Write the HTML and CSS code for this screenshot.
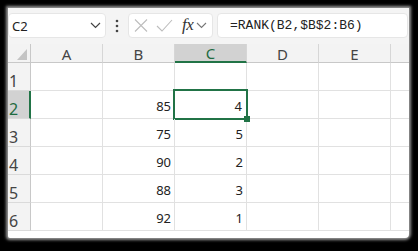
FILE: index.html
```html
<!DOCTYPE html>
<html>
<head>
    <meta charset="utf-8">
    <link rel="stylesheet" href="styles.css">
</head>
<body>
    <div class="paper">
        <div class="toolbar">
            <div class="namebox">
                <span>C2</span>
                <svg class="chev" width="11" height="7" viewBox="0 0 11 7"><path d="M1 1l4.5 4.5L10 1" fill="none" stroke="#444" stroke-width="1.2"/></svg>
            </div>
            <div class="dots">
                <svg width="4" height="14" viewBox="0 0 4 14"><circle cx="2" cy="2" r="1.3" fill="#444"/><circle cx="2" cy="7" r="1.3" fill="#444"/><circle cx="2" cy="12" r="1.3" fill="#444"/></svg>
            </div>
            <div class="fxbox">
                <svg width="14" height="13" viewBox="0 0 14 13"><path d="M1 0.5l12 12M13 0.5l-12 12" fill="none" stroke="#bdbdbd" stroke-width="1.1"/></svg>
                <svg width="17" height="13" viewBox="0 0 17 13"><path d="M1 7l5 5L16 1" fill="none" stroke="#bdbdbd" stroke-width="1.1"/></svg>
                <span class="fx">fx</span>
                <svg width="11" height="7" viewBox="0 0 11 7"><path d="M1 1l4.5 4.5L10 1" fill="none" stroke="#777" stroke-width="1.1"/></svg>
            </div>
            <div class="formula">=RANK(B2,$B$2:B6)</div>
        </div>

        <div class="grid">
            <div class="corner"><span class="tri"></span></div>
            <div class="colhead">A</div>
            <div class="colhead">B</div>
            <div class="colhead active">C</div>
            <div class="colhead">D</div>
            <div class="colhead">E</div>
            <div class="colhead last"></div>

            <div class="rowhead">1</div>
            <div class="cell"></div><div class="cell"></div><div class="cell"></div><div class="cell"></div><div class="cell"></div><div class="cell last"></div>

            <div class="rowhead active">2</div>
            <div class="cell"></div><div class="cell">85</div><div class="cell selected">4<span class="handle"></span></div><div class="cell"></div><div class="cell"></div><div class="cell last"></div>

            <div class="rowhead">3</div>
            <div class="cell"></div><div class="cell">75</div><div class="cell">5</div><div class="cell"></div><div class="cell"></div><div class="cell last"></div>

            <div class="rowhead">4</div>
            <div class="cell"></div><div class="cell">90</div><div class="cell">2</div><div class="cell"></div><div class="cell"></div><div class="cell last"></div>

            <div class="rowhead">5</div>
            <div class="cell"></div><div class="cell">88</div><div class="cell">3</div><div class="cell"></div><div class="cell"></div><div class="cell last"></div>

            <div class="rowhead">6</div>
            <div class="cell"></div><div class="cell">92</div><div class="cell">1</div><div class="cell"></div><div class="cell"></div><div class="cell last"></div>
        </div>
    </div>
</body>
</html>
```

FILE: styles.css
```css
body {
    margin: 0;
    background: #000;
    font-family: "Noto Sans", "Open Sans", sans-serif;
    color: #222;
    width: 418px;
    height: 251px;
    overflow: hidden;
}

.paper {
    margin: 8px 0 0 8px;
    width: 401px;
    height: 230px;
    background: #fff;
    overflow: hidden;
    box-shadow: 0 0 3px 2px rgba(190, 190, 190, 0.8);
    border-radius: 0 0 4px 2px;
}

/* formula bar */

.toolbar {
    height: 36px;
    box-sizing: border-box;
    padding: 5px 0 0 0;
    background: #f4f4f4;
    display: flex;
    align-items: flex-start;
}

.namebox {
    width: 98px;
    height: 25px;
    box-sizing: border-box;
    background: #fff;
    border: 1px solid #e6e6e6;
    border-radius: 4px;
    display: flex;
    align-items: center;
    justify-content: space-between;
    padding: 0 4px 0 3px;
    font-size: 13px;
}

.namebox span {
    margin-top: 1px;
}

.dots {
    width: 22px;
    height: 25px;
    display: flex;
    align-items: center;
    justify-content: center;
}

.fxbox {
    width: 85px;
    height: 25px;
    box-sizing: border-box;
    background: #fff;
    border: 1px solid #e6e6e6;
    border-radius: 4px;
    display: flex;
    align-items: center;
    padding: 0 0 0 5px;
    gap: 0;
}

.fxbox svg:nth-child(2) {
    margin-left: 8px;
}

.fx {
    font-family: "Liberation Serif", "DejaVu Serif", serif;
    font-style: italic;
    font-size: 17px;
    color: #333;
    margin: -2px 3px 0 9px;
    letter-spacing: -0.5px;
}

.formula {
    flex: 1;
    height: 25px;
    box-sizing: border-box;
    margin-left: 4px;
    margin-right: 1px;
    background: #fff;
    border: 1px solid #e6e6e6;
    border-radius: 4px;
    padding: 2px 0 0 12px;
    font-family: "Liberation Mono", "DejaVu Sans Mono", monospace;
    font-size: 13px;
    line-height: 19px;
    color: #222;
}

/* sheet grid */

.grid {
    display: grid;
    grid-template-columns: 23px repeat(5, 72px) 1fr;
    grid-template-rows: 19px repeat(6, 28px);
}

.corner {
    background: #f3f3f3;
    border-right: 1px solid #c8c8c8;
    border-bottom: 1px solid #c8c8c8;
    position: relative;
}

.tri {
    position: absolute;
    right: 3px;
    bottom: 2px;
    width: 0;
    height: 0;
    border-left: 10px solid transparent;
    border-bottom: 11px solid #c4c4c4;
}

.colhead {
    background: #f3f3f3;
    border-right: 1px solid #d6d6d6;
    border-bottom: 1px solid #c8c8c8;
    display: flex;
    align-items: center;
    justify-content: center;
    font-size: 15px;
    color: #444;
    padding-top: 1px;
}

.colhead.active {
    background: #d2d2d2;
    border-bottom: 2px solid #217346;
    color: #1e6b40;
}

.colhead.last {
    border-right: none;
}

.rowhead {
    background: #f3f3f3;
    border-right: 1px solid #c8c8c8;
    border-bottom: 1px solid #dadada;
    display: flex;
    align-items: flex-end;
    padding: 0 0 0 1px;
    font-size: 16px;
    line-height: 18px;
    color: #444;
}

.rowhead.active {
    background: #d2d2d2;
    border-right: 2px solid #217346;
    color: #1e6b40;
}

.cell {
    border-right: 1px solid #e1e1e1;
    border-bottom: 1px solid #e1e1e1;
    display: flex;
    align-items: flex-end;
    justify-content: flex-end;
    padding: 0 3px 4px 0;
    font-size: 13px;
    line-height: 16px;
    color: #222;
    position: relative;
}

.cell.last {
    border-right: none;
}

.cell.selected {
    padding-right: 4px;
}

.cell.selected::after {
    content: "";
    position: absolute;
    inset: -2px;
    border: 2px solid #217346;
}

.handle {
    position: absolute;
    right: -4px;
    bottom: -4px;
    width: 6px;
    height: 6px;
    background: #217346;
    z-index: 2;
}
```
